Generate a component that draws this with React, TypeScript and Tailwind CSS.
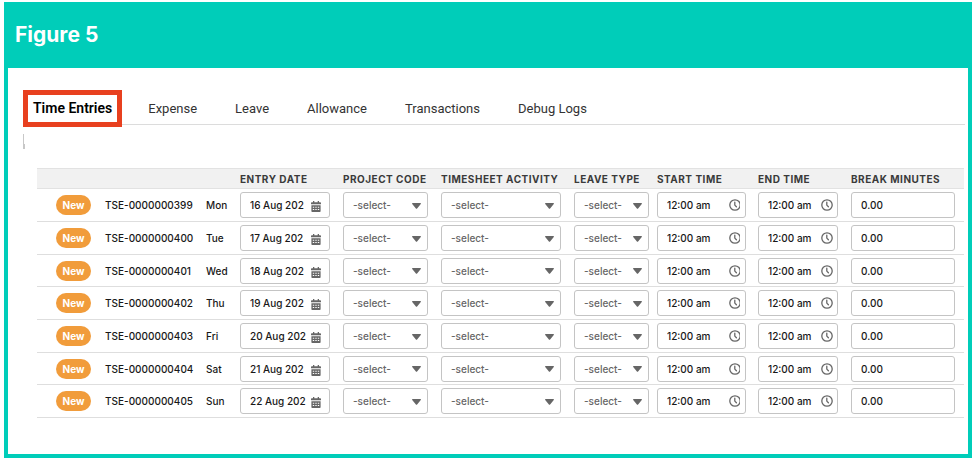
import type { ReactNode } from "react";

const tabs = ["Expense", "Leave", "Allowance", "Transactions", "Debug Logs"];

const entries = [
  { id: "TSE-0000000399", day: "Mon", date: "16 Aug 202" },
  { id: "TSE-0000000400", day: "Tue", date: "17 Aug 202" },
  { id: "TSE-0000000401", day: "Wed", date: "18 Aug 202" },
  { id: "TSE-0000000402", day: "Thu", date: "19 Aug 202" },
  { id: "TSE-0000000403", day: "Fri", date: "20 Aug 202" },
  { id: "TSE-0000000404", day: "Sat", date: "21 Aug 202" },
  { id: "TSE-0000000405", day: "Sun", date: "22 Aug 202" },
];

function CalendarIcon() {
  return (
    <svg viewBox="0 0 10 11" className="w-[10px] h-[11px] shrink-0 mt-[3px]" fill="#666">
      <path d="M2 0h1.3v1.2h3.4V0H8v1.2h1.2c.5 0 .8.3.8.8v1.3H0V2c0-.5.3-.8.8-.8H2z" />
      <path
        fillRule="evenodd"
        d="M.4 4.3h9.2v5.9c0 .5-.3.8-.8.8H1.2c-.5 0-.8-.3-.8-.8zM1.8 5.8v1h1.4v-1zm2.5 0v1h1.4v-1zm2.5 0v1h1.4v-1zM1.8 8.1v1h1.4v-1zm2.5 0v1h1.4v-1zm2.5 0v1h1.4v-1z"
      />
    </svg>
  );
}

function ClockIcon({ cut }: { cut?: boolean }) {
  return (
    <svg
      viewBox={cut ? "0 0 11 12" : "0 0 12 12"}
      className={cut ? "w-[11px] h-[12px] shrink-0" : "w-[12px] h-[12px] shrink-0"}
      fill="none"
      stroke="#666"
      strokeWidth="1.3"
      strokeLinecap="round"
    >
      <circle cx="6" cy="6" r="5.2" />
      <path d="M5.8 3.2v2.9l1.6 1.7" />
    </svg>
  );
}

function Field({ children }: { children: ReactNode }) {
  return (
    <div className="flex items-center h-[26px] pl-[9px] border border-[#c4c4c4] rounded-[3px] bg-white">
      {children}
    </div>
  );
}

function SelectField({ label }: { label: string }) {
  return (
    <Field>
      <select
        aria-label={label}
        className="flex-1 min-w-0 appearance-none bg-transparent text-[10px] font-medium text-[#666] outline-none"
      >
        <option>-select-</option>
      </select>
      <svg viewBox="0 0 9 6" className="w-[9px] h-[6px] shrink-0 mr-[6px] mt-px" fill="#666">
        <path d="M.6 0h7.8c.5 0 .7.5.4.9L5.1 5.4c-.3.4-.9.4-1.2 0L.2.9C-.1.5.1 0 .6 0z" />
      </svg>
    </Field>
  );
}

export default function App() {
  return (
    <div className="px-1 pt-[2px] pb-1 bg-white font-['Inter','Liberation_Sans',sans-serif] text-[#181818]">
      <div className="bg-[#00cdb9] px-1 pb-1">
        <header className="flex items-center h-[66px] px-[7px]">
          <h1 className="text-[21px] leading-6 font-bold text-white">Figure 5</h1>
        </header>

        <main className="bg-white pt-[22px] pb-9">
          <nav className="flex items-center gap-[38px] h-[35px] ml-[15px] mr-[3px] border-b border-[#dcdcdc] font-['Roboto','Liberation_Sans',sans-serif] text-[13px] text-[#333]">
            <button className="self-start relative h-[37px] shrink-0 px-[5px] -mr-3 border-5 border-[#e8401f] bg-white text-[14px] font-semibold text-black">
              Time Entries
            </button>
            {tabs.map((tab) => (
              <button key={tab} className="shrink-0 pt-1">
                {tab}
              </button>
            ))}
          </nav>

          <svg viewBox="0 0 3 15" className="w-[3px] h-[15px] ml-[15px] mt-[9px]" fill="#c8c8c8">
            <path d="M0 0h1v10h1v5H0z" />
          </svg>

          <div className="pl-[29px] pr-1 mt-[19px]">
            <table className="w-full table-fixed text-left">
              <colgroup>
                <col className="w-[68px]" />
                <col className="w-[101px]" />
                <col className="w-[34px]" />
                <col className="w-[103px]" />
                <col className="w-[98px]" />
                <col className="w-[133px]" />
                <col className="w-[83px]" />
                <col className="w-[101px]" />
                <col className="w-[93px]" />
                <col className="w-[113px]" />
              </colgroup>
              <thead>
                <tr className="h-5 bg-[#f1f1f1] border-y border-[#e2e2e2] text-[10px] leading-3 tracking-wider text-[#3a3a3a] whitespace-nowrap">
                  <th></th>
                  <th></th>
                  <th></th>
                  <th className="font-bold">ENTRY DATE</th>
                  <th className="font-bold">PROJECT CODE</th>
                  <th className="font-bold">TIMESHEET ACTIVITY</th>
                  <th className="font-bold">LEAVE TYPE</th>
                  <th className="font-bold">START TIME</th>
                  <th className="font-bold">END TIME</th>
                  <th className="font-bold">BREAK MINUTES</th>
                </tr>
              </thead>
              <tbody>
                {entries.map((entry) => (
                  <tr
                    key={entry.id}
                    className="h-[33px] nth-[3n]:h-8 border-b border-[#dedede] text-[10px] leading-4 font-medium"
                  >
                    <td className="pl-[19px]">
                      <span className="flex items-center justify-center w-[35px] h-5 rounded-full bg-[#f19c3b] font-bold text-white">
                        New
                      </span>
                    </td>
                    <td className="whitespace-nowrap">{entry.id}</td>
                    <td>{entry.day}</td>
                    <td className="pr-[13px]">
                      <Field>
                        <input
                          aria-label={`Entry date ${entry.id}`}
                          defaultValue={entry.date}
                          className="flex-1 min-w-0 mr-[3px] outline-none"
                        />
                        <CalendarIcon />
                        <span className="w-2 shrink-0" />
                      </Field>
                    </td>
                    <td className="pr-[13px]">
                      <SelectField label="Project code" />
                    </td>
                    <td className="pr-[13px]">
                      <SelectField label="Timesheet activity" />
                    </td>
                    <td className="pr-2">
                      <SelectField label="Leave type" />
                    </td>
                    <td className="pr-3">
                      <Field>
                        <input aria-label="Start time" defaultValue="12:00 am" className="flex-1 min-w-0 outline-none" />
                        <ClockIcon cut />
                        <span className="w-[5px] shrink-0" />
                      </Field>
                    </td>
                    <td className="pr-[13px]">
                      <Field>
                        <input aria-label="End time" defaultValue="12:00 am" className="flex-1 min-w-0 outline-none" />
                        <ClockIcon />
                        <span className="w-1 shrink-0" />
                      </Field>
                    </td>
                    <td className="pr-[9px]">
                      <Field>
                        <input aria-label="Break minutes" defaultValue="0.00" className="flex-1 min-w-0 outline-none" />
                      </Field>
                    </td>
                  </tr>
                ))}
              </tbody>
            </table>
          </div>
        </main>
      </div>
    </div>
  );
}
